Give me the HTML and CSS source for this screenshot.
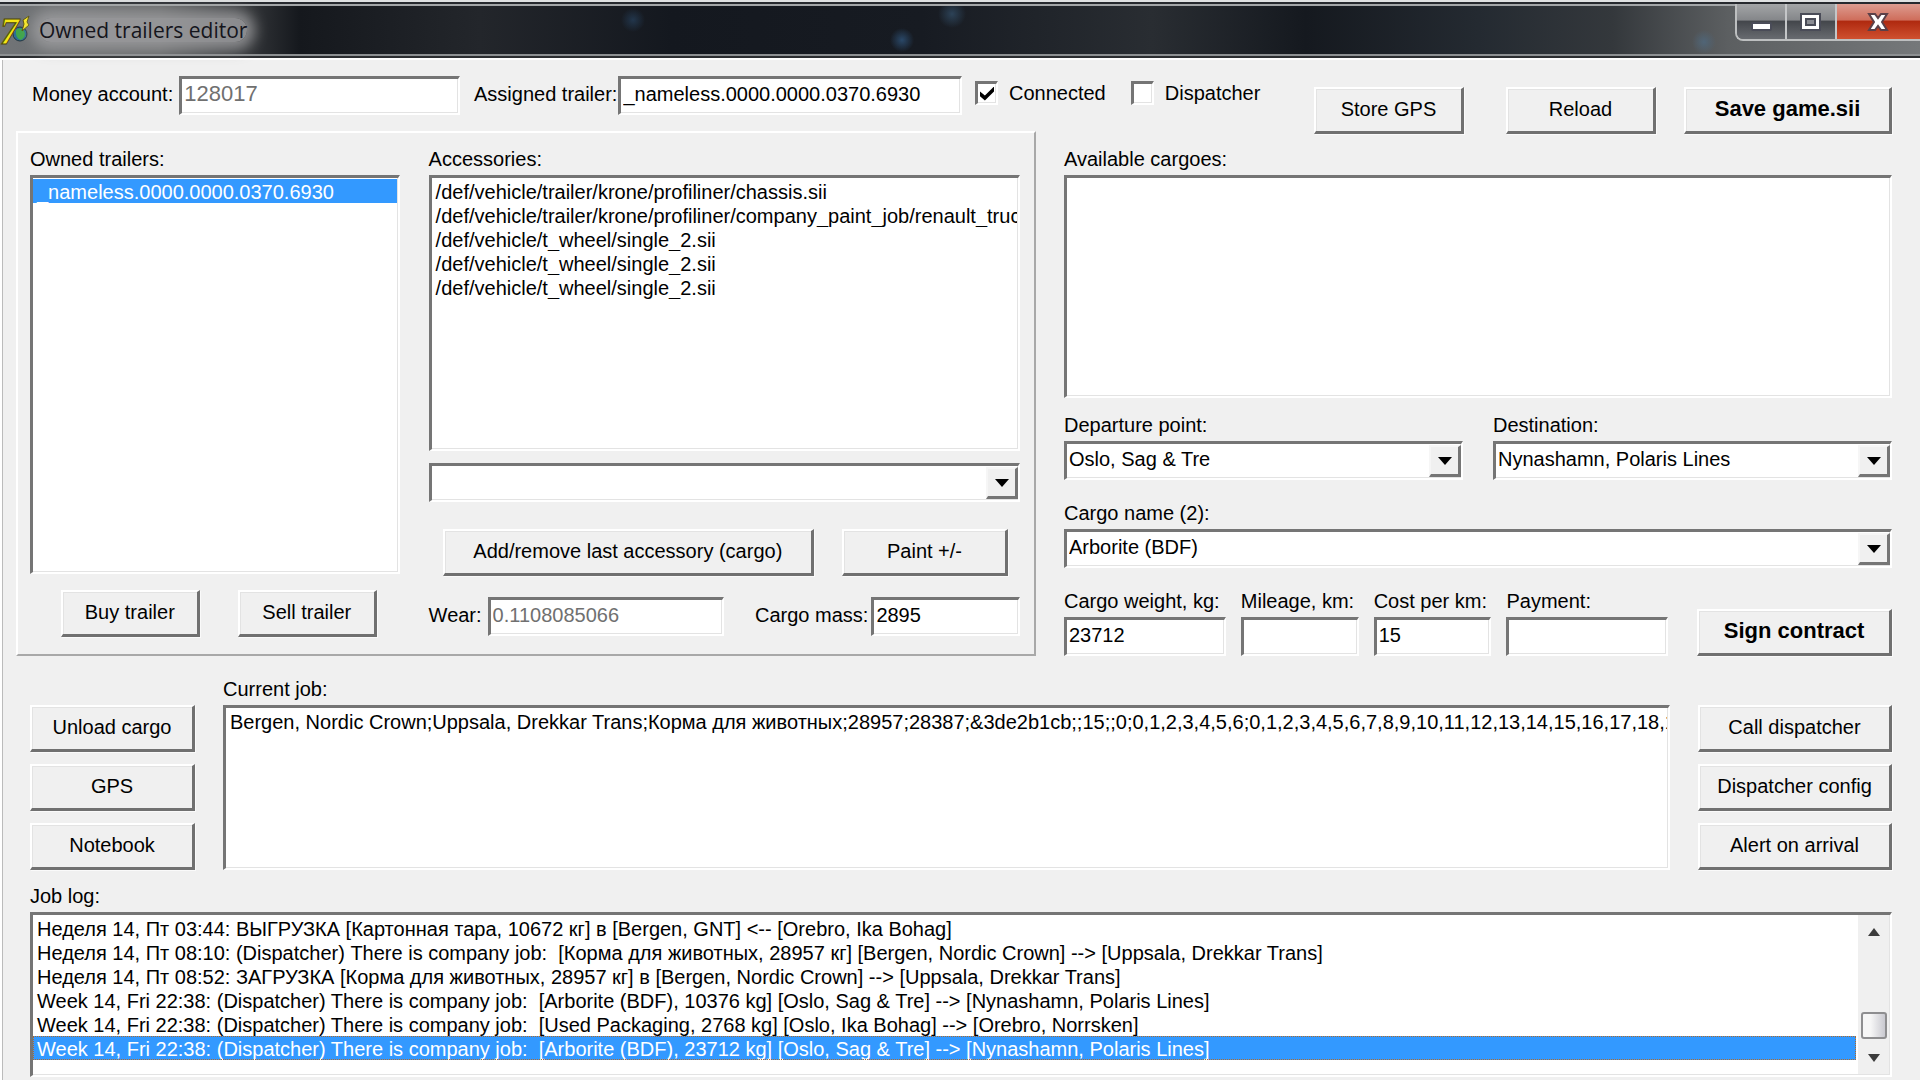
FILE: index.html
```
<!DOCTYPE html>
<html lang="en">
<head>
    <meta charset="UTF-8">
    <meta name="viewport" content="width=device-width, initial-scale=1.0">
    <title>Owned trailers editor</title>
    <link rel="stylesheet" href="styles.css">
</head>
<body>
<div class="window">
    <header class="titlebar">
        <svg class="app-icon" viewBox="0 0 32 36" aria-hidden="true">
            <circle cx="20" cy="22" r="7" fill="#2c6f96" stroke="#22343c"/>
            <path d="M16 18q5-4 8 1t-3 9q-6-2-5-10z" fill="#3fa64b"/>
            <path d="M29 4l-6 4 1 4-2 7 7-6-2-3z" fill="#ffee20" stroke="#5a5208"/>
            <text x="0" y="32" class="app-icon-seven">7</text>
        </svg>
        <h1>Owned trailers editor</h1>
        <div class="window-buttons">
            <button type="button" class="win-btn" aria-label="Minimize">
                <svg viewBox="0 0 24 24" width="24" height="24"><rect x="3" y="13" width="19" height="7" rx="1" fill="#fff" stroke="#4a4c58" stroke-width="2"/></svg>
            </button>
            <button type="button" class="win-btn" aria-label="Maximize">
                <svg viewBox="0 0 24 24" width="24" height="24"><path d="M2 4h19v16H2z" fill="#fff" stroke="#4a4c58" stroke-width="2"/><path d="M7 9h9v6H7z" fill="#8b8d94" stroke="#4a4c58" stroke-width="2"/></svg>
            </button>
            <button type="button" class="win-btn close" aria-label="Close">
                <svg viewBox="0 0 24 24" width="24" height="24"><path d="M3 4h6l3 4 3-4h6l-5 8 5 8h-6l-3-4-3 4H3l5-8z" fill="#fff" stroke="#5c4048" stroke-width="2"/></svg>
            </button>
        </div>
    </header>

    <main class="client">
        <div class="toolbar">
            <div class="field money">
                <label for="money">Money account:</label>
                <input type="text" id="money" value="128017" disabled>
            </div>
            <div class="field assigned">
                <label for="assigned">Assigned trailer:</label>
                <input type="text" id="assigned" value="_nameless.0000.0000.0370.6930">
            </div>
            <div class="checks">
                <label class="check"><input type="checkbox" checked>Connected</label>
                <label class="check"><input type="checkbox">Dispatcher</label>
            </div>
            <div class="toolbar-buttons">
                <button type="button" class="btn">Store GPS</button>
                <button type="button" class="btn">Reload</button>
                <button type="button" class="btn strong">Save game.sii</button>
            </div>
        </div>

        <div class="editor">
            <section class="panel">
                <div class="trailers">
                    <span class="caption" id="owned-label">Owned trailers:</span>
                    <ul class="list" role="listbox" aria-labelledby="owned-label">
                        <li role="option" aria-selected="true">_nameless.0000.0000.0370.6930</li>
                    </ul>
                    <div class="trailer-buttons">
                        <button type="button" class="btn">Buy trailer</button>
                        <button type="button" class="btn">Sell trailer</button>
                    </div>
                </div>
                <div class="accessories">
                    <span class="caption" id="acc-label">Accessories:</span>
                    <ul class="list" role="listbox" aria-labelledby="acc-label">
                        <li role="option">/def/vehicle/trailer/krone/profiliner/chassis.sii</li>
                        <li role="option">/def/vehicle/trailer/krone/profiliner/company_paint_job/renault_trucks.sii</li>
                        <li role="option">/def/vehicle/t_wheel/single_2.sii</li>
                        <li role="option">/def/vehicle/t_wheel/single_2.sii</li>
                        <li role="option">/def/vehicle/t_wheel/single_2.sii</li>
                    </ul>
                    <div class="combo">
                        <select aria-label="Accessory"><option></option></select>
                        <span class="combo-arrow"></span>
                    </div>
                    <div class="accessory-buttons">
                        <button type="button" class="btn">Add/remove last accessory (cargo)</button>
                        <button type="button" class="btn paint">Paint +/-</button>
                    </div>
                    <div class="accessory-fields">
                        <div class="field wear">
                            <label for="wear">Wear:</label>
                            <input type="text" id="wear" value="0.1108085066" disabled>
                        </div>
                        <div class="field mass">
                            <label for="mass">Cargo mass:</label>
                            <input type="text" id="mass" value="2895">
                        </div>
                    </div>
                </div>
            </section>

            <section class="contract">
                <span class="caption" id="cargoes-label">Available cargoes:</span>
                <ul class="list" role="listbox" aria-labelledby="cargoes-label"></ul>
                <div class="route">
                    <div class="stack">
                        <label for="departure">Departure point:</label>
                        <div class="combo">
                            <select id="departure"><option>Oslo, Sag &amp; Tre</option></select>
                            <span class="combo-arrow"></span>
                        </div>
                    </div>
                    <div class="stack">
                        <label for="destination">Destination:</label>
                        <div class="combo">
                            <select id="destination"><option>Nynashamn, Polaris Lines</option></select>
                            <span class="combo-arrow"></span>
                        </div>
                    </div>
                </div>
                <div class="stack cargo-name">
                    <label for="cargo">Cargo name (2):</label>
                    <div class="combo">
                        <select id="cargo"><option>Arborite (BDF)</option></select>
                        <span class="combo-arrow"></span>
                    </div>
                </div>
                <div class="terms">
                    <div class="stack">
                        <label for="weight">Cargo weight, kg:</label>
                        <input type="text" id="weight" value="23712">
                    </div>
                    <div class="stack">
                        <label for="mileage">Mileage, km:</label>
                        <input type="text" id="mileage">
                    </div>
                    <div class="stack">
                        <label for="cost">Cost per km:</label>
                        <input type="text" id="cost" value="15">
                    </div>
                    <div class="stack">
                        <label for="payment">Payment:</label>
                        <input type="text" id="payment">
                    </div>
                    <button type="button" class="btn strong sign">Sign contract</button>
                </div>
            </section>
        </div>

        <section class="job">
            <div class="button-column">
                <button type="button" class="btn">Unload cargo</button>
                <button type="button" class="btn">GPS</button>
                <button type="button" class="btn">Notebook</button>
            </div>
            <div class="current-job">
                <span class="caption" id="job-label">Current job:</span>
                <ul class="list" role="listbox" aria-labelledby="job-label">
                    <li role="option">Bergen, Nordic Crown;Uppsala, Drekkar Trans;Корма для животных;28957;28387;&amp;3de2b1cb;;15;;0;0,1,2,3,4,5,6;0,1,2,3,4,5,6,7,8,9,10,11,12,13,14,15,16,17,18,1</li>
                </ul>
            </div>
            <div class="button-column">
                <button type="button" class="btn">Call dispatcher</button>
                <button type="button" class="btn">Dispatcher config</button>
                <button type="button" class="btn">Alert on arrival</button>
            </div>
        </section>

        <section class="log">
            <span class="caption" id="log-label">Job log:</span>
            <div class="log-box">
                <ul class="log-rows" role="listbox" aria-labelledby="log-label">
                    <li role="option">Неделя 14, Пт 03:44: ВЫГРУЗКА [Картонная тара, 10672 кг] в [Bergen, GNT] &lt;-- [Orebro, Ika Bohag]</li>
                    <li role="option">Неделя 14, Пт 08:10: (Dispatcher) There is company job:  [Корма для животных, 28957 кг] [Bergen, Nordic Crown] --&gt; [Uppsala, Drekkar Trans]</li>
                    <li role="option">Неделя 14, Пт 08:52: ЗАГРУЗКА [Корма для животных, 28957 кг] в [Bergen, Nordic Crown] --&gt; [Uppsala, Drekkar Trans]</li>
                    <li role="option">Week 14, Fri 22:38: (Dispatcher) There is company job:  [Arborite (BDF), 10376 kg] [Oslo, Sag &amp; Tre] --&gt; [Nynashamn, Polaris Lines]</li>
                    <li role="option">Week 14, Fri 22:38: (Dispatcher) There is company job:  [Used Packaging, 2768 kg] [Oslo, Ika Bohag] --&gt; [Orebro, Norrsken]</li>
                    <li role="option" aria-selected="true" class="focused">Week 14, Fri 22:38: (Dispatcher) There is company job:  [Arborite (BDF), 23712 kg] [Oslo, Sag &amp; Tre] --&gt; [Nynashamn, Polaris Lines]</li>
                </ul>
                <div class="scrollbar" aria-hidden="true">
                    <svg viewBox="0 0 12 8" width="12" height="8"><path d="M0 8l6-8 6 8z" fill="#3c3c3c"/></svg>
                    <span class="thumb"></span>
                    <svg viewBox="0 0 12 8" width="12" height="8"><path d="M0 0h12L6 8z" fill="#3c3c3c"/></svg>
                </div>
            </div>
        </section>
    </main>
</div>
</body>
</html>
```
FILE: styles.css
```
* {
    box-sizing: border-box;
}
body {
    margin: 0;
    background: #f0f0f0;
    color: #000;
    font-family: "Liberation Sans", Arial, sans-serif;
    font-size: 20px;
    line-height: 24px;
}
button, input, select {
    font: inherit;
    color: inherit;
    margin: 0;
    border-radius: 0;
}
ul {
    list-style: none;
    margin: 0;
    padding: 0;
}
.window {
    display: flex;
    flex-direction: column;
    min-height: 100vh;
    border-top: 2px solid #dfe1e2;
}

/* title bar */
.titlebar {
    display: flex;
    align-items: center;
    height: 56px;
    border-top: 2px solid #26292e;
    border-bottom: 2px solid #2b2d30;
    box-shadow: inset 0 2px #a3a6a8, inset 0 -2px #8d9092;
    background:
        radial-gradient(circle 12px at 902px 36px, #2a4868, transparent),
        radial-gradient(circle 12px at 633px 16px, #22364c, transparent),
        radial-gradient(circle 14px at 952px 10px, #2c4257, transparent),
        radial-gradient(circle 12px at 1704px 38px, #506577, transparent),
        linear-gradient(90deg, #717477 0, #666869 160px, #15181d 300px, #23262b 25%, #14181f 35%, #171b22 48%, #292d32 60%, #15191f 68%, #242a31 77%, #34383c 84%, #5c5f61 90%, #75787a);
}
.app-icon {
    flex: none;
    width: 32px;
    height: 36px;
}
.app-icon-seven {
    font: italic bold 38px "Liberation Serif", serif;
    fill: #f5e616;
    stroke: #4d4708;
}
.titlebar h1 {
    margin: 0 0 0 7px;
    font: 21px/24px "Open Sans", sans-serif;
    color: #15151c;
    border-radius: 12px;
    background: rgba(160, 160, 162, 0.8);
    box-shadow: 0 0 14px 8px rgba(160, 160, 162, 0.8);
}
.window-buttons {
    display: flex;
    align-self: flex-start;
    margin-left: auto;
    height: 37px;
    border: 2px solid #bdbfc0;
    border-width: 0 0 2px 2px;
    border-radius: 0 0 0 8px;
    overflow: hidden;
}
.win-btn {
    display: flex;
    align-items: center;
    justify-content: center;
    width: 50px;
    padding: 0;
    border: 1px solid #c4c6c8;
    border-width: 0 2px 0 0;
    background: linear-gradient(#a3a5a7, #85878a 45%, #44474c 50%, #686b70);
}
.win-btn.close {
    width: 83px;
    padding-right: 1px;
    border: 0;
    background: linear-gradient(#dd9c90, #cf6e5c 45%, #b02a10 50%, #cf5030);
}

/* common controls */
.client {
    flex: 1;
    display: flex;
    flex-direction: column;
    padding: 16px 28px 3px 14px;
    border: 2px solid #fff;
    border-width: 2px 0 0 2px;
    box-shadow: inset 1px 0 #bbb;
}
.btn {
    height: 47px;
    padding: 0 6px 2px;
    border: 3px solid #707070;
    border-top: 2px solid #fff;
    border-left: 2px solid #fff;
    background: #f0f0f0;
    box-shadow: inset 1px 1px #e3e3e3, 1px 1px #fafafa;
    white-space: nowrap;
}
.strong {
    font-size: 22px;
    font-weight: bold;
}
input[type="text"], select, .list, .log-box {
    border: 3px solid #757575;
    border-right: 2px solid #fff;
    border-bottom: 2px solid #fff;
    background: #fff;
    box-shadow: inset -1px -1px #e3e3e3;
}
input[type="text"] {
    width: 100%;
    height: 39px;
    padding: 0 2px 4px;
    outline: 0;
}
input[type="text"]:disabled {
    color: #707070;
}
.combo {
    position: relative;
}
.combo select {
    display: block;
    width: 100%;
    height: 39px;
    padding: 0 36px 4px 2px;
    appearance: none;
}
.combo-arrow {
    position: absolute;
    top: 4px;
    right: 2px;
    bottom: 3px;
    width: 32px;
    border: 3px solid #757575;
    border-top: 2px solid #f6f6f6;
    border-left: 2px solid #f6f6f6;
    background: #f0f0f0;
    pointer-events: none;
}
.combo-arrow::after {
    content: "";
    display: block;
    margin: 10px auto 0;
    width: 0;
    border: 7px solid transparent;
    border-top: 8px solid #000;
    border-bottom: 0;
}
.caption {
    display: block;
    margin-bottom: 4px;
}
.list li, .log-rows li {
    height: 24px;
    padding-left: 4px;
    line-height: 26px;
    white-space: pre;
    overflow: hidden;
}
.list {
    padding: 1px 1px 0 0;
    overflow: hidden;
}
[aria-selected="true"] {
    background: #3399ff;
    color: #fff;
}
.field {
    display: flex;
    align-items: center;
    gap: 6px;
    white-space: nowrap;
}
.field label {
    padding-bottom: 4px;
}
.stack {
    display: flex;
    flex-direction: column;
    gap: 4px;
    min-width: 0;
    white-space: nowrap;
}

/* top row */
.toolbar {
    display: flex;
    align-items: flex-start;
    height: 55px;
    padding-left: 16px;
}
.money {
    width: 428px;
    margin-right: 14px;
}
.money input {
    font-size: 22px;
}
.assigned {
    gap: 1px;
    width: 488px;
    margin-right: 13px;
}
.checks {
    display: flex;
    gap: 25px;
    padding-top: 5px;
}
.check {
    display: flex;
    align-items: center;
    gap: 11px;
}
.check input {
    appearance: none;
    display: grid;
    place-items: center;
    width: 23px;
    height: 24px;
    border: 3px solid #757575;
    border-right: 2px solid #fff;
    border-bottom: 2px solid #fff;
    background: #fff;
    box-shadow: inset -1px -1px #e3e3e3;
}
.check input:checked::before {
    content: "";
    width: 14px;
    height: 14px;
    background: #000;
    clip-path: polygon(0 35%, 35% 65%, 100% 0, 100% 35%, 35% 100%, 0 70%);
}
.toolbar-buttons {
    display: flex;
    gap: 28px;
    margin-left: auto;
    padding-top: 11px;
}
.toolbar-buttons .btn {
    width: 150px;
}
.toolbar-buttons .btn:first-child {
    margin-right: 14px;
}
.toolbar-buttons .strong {
    width: 208px;
}

/* trailers and contract */
.editor {
    display: grid;
    grid-template-columns: minmax(0, 1020fr) minmax(0, 828fr);
    gap: 28px;
}
.panel {
    display: grid;
    grid-template-columns: minmax(0, 5fr) minmax(0, 8fr);
    gap: 29px;
    padding: 14px 14px 17px 12px;
    border: 2px solid #fff;
    border-right-color: #a8a8a8;
    border-bottom-color: #a8a8a8;
}
.trailers, .accessories {
    display: flex;
    flex-direction: column;
}
.trailers .list {
    flex: 1;
}
.trailer-buttons {
    display: flex;
    justify-content: center;
    gap: 38px;
    padding: 16px 0 0 8px;
}
.trailer-buttons .btn {
    width: 139px;
}
.accessories .list {
    height: 276px;
    margin-bottom: 12px;
}
.accessory-buttons {
    display: flex;
    gap: 28px;
    margin: 27px 12px 21px 14px;
}
.accessory-buttons .btn {
    flex: 1;
}
.accessory-buttons .paint {
    flex: 0 0 166px;
}
.accessory-fields {
    display: flex;
    justify-content: space-between;
}
.wear {
    width: 295px;
}
.mass {
    gap: 3px;
    width: 265px;
}
.contract {
    padding-top: 16px;
}
.contract .list {
    height: 223px;
    margin-bottom: 15px;
}
.route {
    display: grid;
    grid-template-columns: 1fr 1fr;
    gap: 30px;
}
.cargo-name {
    margin: 21px 0;
}
.terms {
    display: grid;
    grid-template-columns: 162fr 118fr 118fr 162fr 209fr;
    gap: 15px;
    align-items: end;
}
.sign {
    margin-left: 14px;
}

/* current job */
.job {
    display: grid;
    grid-template-columns: 165px minmax(0, 1fr) 194px;
    gap: 28px;
    align-items: end;
    margin-top: 21px;
    padding-left: 14px;
}
.button-column {
    display: flex;
    flex-direction: column;
    gap: 12px;
}
.current-job .list {
    height: 165px;
}

/* job log */
.log {
    flex: 1;
    display: flex;
    flex-direction: column;
    margin-top: 14px;
    padding-left: 14px;
}
.log-box {
    flex: 1;
    display: flex;
}
.log-rows {
    flex: 1;
    min-width: 0;
    padding-top: 1px;
}
.log-rows .focused {
    outline: 1px dotted #b06a2a;
    outline-offset: -1px;
}
.scrollbar {
    display: flex;
    flex-direction: column;
    align-items: center;
    width: 31px;
    margin: 0 1px 1px 2px;
    padding: 13px 0 12px;
    background: #f0f0f0;
}
.thumb {
    width: 26px;
    height: 27px;
    margin: auto 0 15px;
    border: 2px solid #8e8e90;
    border-radius: 3px;
    background: linear-gradient(90deg, #f6f6f6 35%, #c9c9d0);
}
```
